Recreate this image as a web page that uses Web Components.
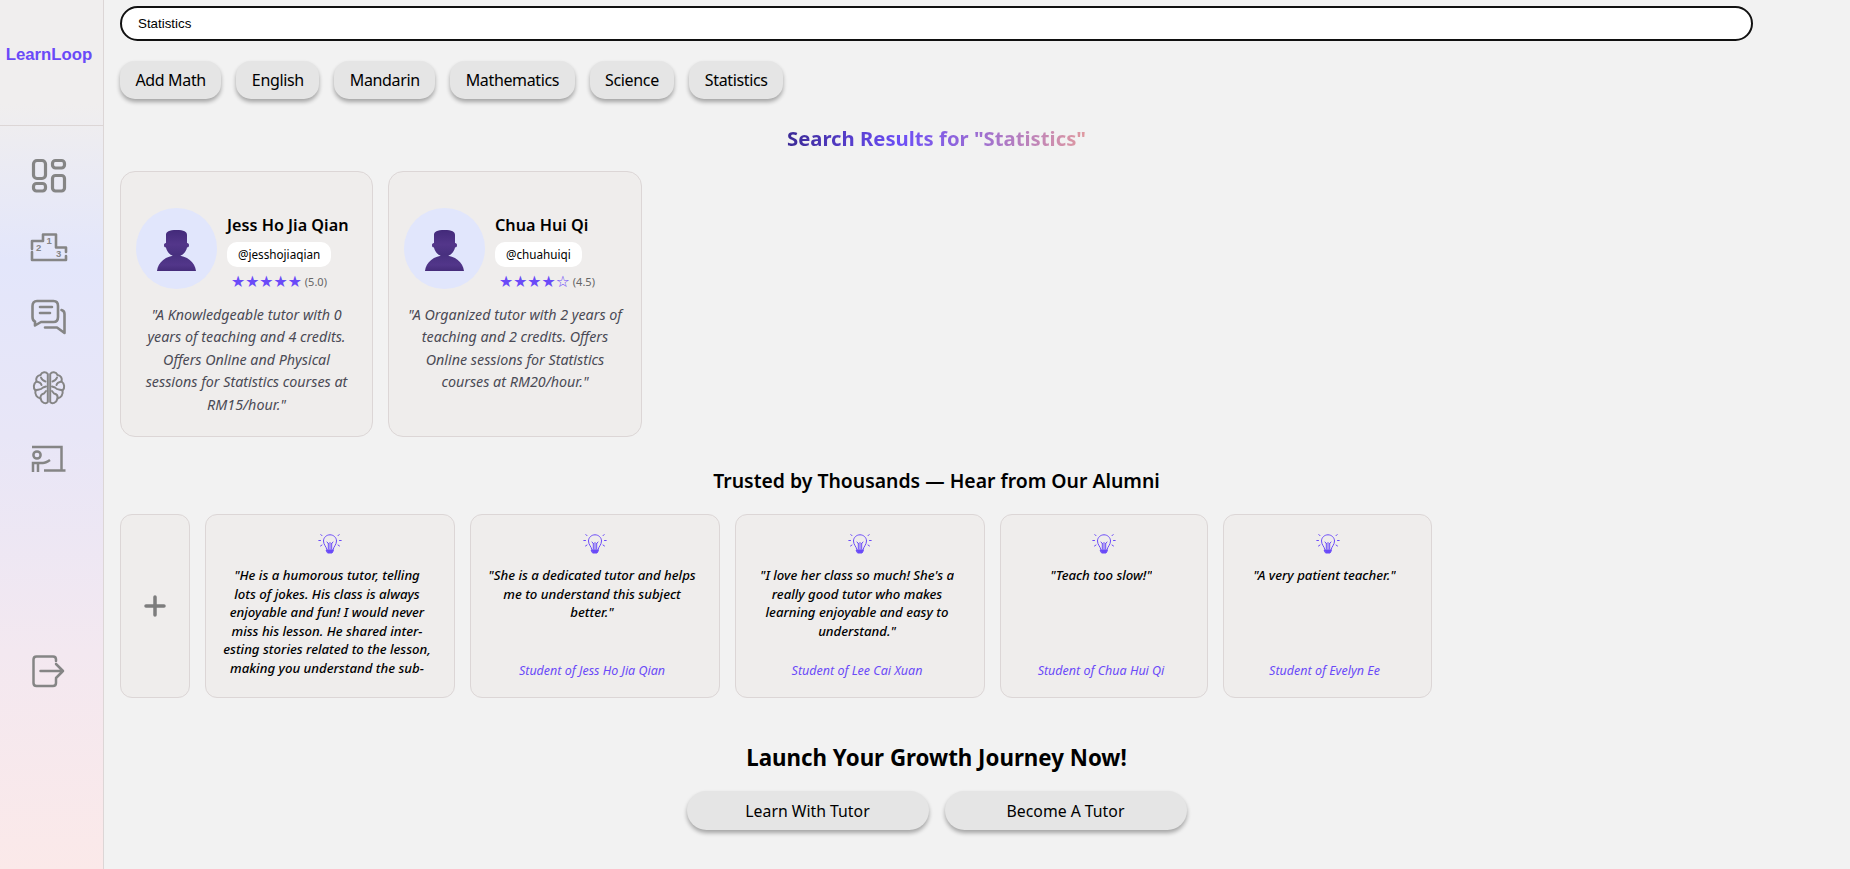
<!DOCTYPE html>
<html lang="en"><head><meta charset="utf-8"><title>LearnLoop</title>
<style>
html,body{margin:0;height:100%;background:#f2f2f2;overflow:hidden}
body{font-family:"Noto Sans","Open Sans",sans-serif;color:#000}
</style></head><body>
<ll-app>
  <ll-sidebar slot="side"></ll-sidebar>
  <ll-search value="Statistics"></ll-search>
  <ll-chips><ll-chip>Add Math</ll-chip><ll-chip>English</ll-chip><ll-chip>Mandarin</ll-chip><ll-chip>Mathematics</ll-chip><ll-chip>Science</ll-chip><ll-chip>Statistics</ll-chip></ll-chips>
  <ll-results>Search Results for "Statistics"</ll-results>
  <ll-row class="tutors">
    <ll-tutor name="Jess Ho Jia Qian" handle="@jesshojiaqian" stars="★★★★★" rating="(5.0)" w="253">"A Knowledgeable tutor with 0<br>years of teaching and 4 credits.<br>Offers Online and Physical<br>sessions for Statistics courses at<br>RM15/hour."</ll-tutor>
    <ll-tutor name="Chua Hui Qi" handle="@chuahuiqi" stars="★★★★☆" rating="(4.5)" w="254">"A Organized tutor with 2 years of<br>teaching and 2 credits. Offers<br>Online sessions for Statistics<br>courses at RM20/hour."</ll-tutor>
  </ll-row>
  <ll-title size="19.4" top="30">Trusted by Thousands — Hear from Our Alumni</ll-title>
  <ll-reviews>
    <ll-add></ll-add>
    <ll-review w="250" author="">"He is a humorous tutor, telling<br>lots of jokes. His class is always<br>enjoyable and fun! I would never<br>miss his lesson. He shared inter-<br>esting stories related to the lesson,<br>making you understand the sub-</ll-review>
    <ll-review w="250" author="Student of Jess Ho Jia Qian">"She is a dedicated tutor and helps<br>me to understand this subject<br>better."</ll-review>
    <ll-review w="250" author="Student of Lee Cai Xuan">"I love her class so much! She's a<br>really good tutor who makes<br>learning enjoyable and easy to<br>understand."</ll-review>
    <ll-review w="208" author="Student of Chua Hui Qi">"Teach too slow!"</ll-review>
    <ll-review w="209" author="Student of Evelyn Ee">"A very patient teacher."</ll-review>
  </ll-reviews>
  <ll-title size="22.3" top="44" bold="1">Launch Your Growth Journey Now!</ll-title>
  <ll-actions><ll-cta>Learn With Tutor</ll-cta><ll-cta>Become A Tutor</ll-cta></ll-actions>
</ll-app>
<script>
function def(name, css, html, init){
  customElements.define(name, class extends HTMLElement{
    constructor(){super();this.attachShadow({mode:'open'});}
    connectedCallback(){
      const a=n=>this.getAttribute(n)||'';
      this.shadowRoot.innerHTML='<style>'+css+'</style>'+(typeof html==='function'?html(a):html);
      if(init)init.call(this,a);
    }
  });
}
const FONT='"Noto Sans","Open Sans",sans-serif';
const PURPLE='#6a4af8';
const IC='fill="none" stroke="#858585" stroke-linecap="round" stroke-linejoin="round"';

def('ll-app',`:host{display:flex;height:869px;width:1850px}
.main{flex:1;min-width:0;padding:6px 97px 0 16px;display:flex;flex-direction:column}`,
`<slot name="side"></slot><div class="main"><slot></slot></div>`);

def('ll-sidebar',`:host{display:flex;flex-direction:column;width:104px;flex:none;box-sizing:border-box;border-right:1px solid #dcd6d6;
  background:linear-gradient(180deg,#f0eeee 0,#f0eeee 12%,#e3e6fb 30%,#e8e6f7 50%,#f3e8f0 75%,#fbe9e9 100%)}
.logo{height:126px;box-sizing:border-box;border-bottom:1px solid #dcd6d6;display:flex;align-items:flex-start;justify-content:center;padding:46px 5px 0 0;
  font:bold 16.800px/18px "Liberation Sans",Arial,sans-serif;color:${PURPLE}}
nav{display:flex;flex-direction:column;align-items:center;flex:1;padding-right:5px}
svg{display:block}
.i1{margin-top:32px}.i2{margin-top:38px}.i3{margin-top:37px}.i4{margin-top:33px}.i5{margin-top:39px}.i6{margin-top:182px}`,
`<div class="logo">LearnLoop</div><nav>
<svg class="i1" width="36" height="36" viewBox="0 0 36 36" ${IC} stroke-width="3.2"><rect x="2.500" y="2.500" width="12" height="18" rx="3.500"/><rect x="21.500" y="2.500" width="12" height="7.500" rx="3"/><rect x="2.500" y="25.500" width="12" height="7.500" rx="3"/><rect x="21.500" y="17.500" width="12" height="15.500" rx="3"/></svg>
<svg class="i2" width="38" height="30" viewBox="0 0 38 30" ${IC} stroke-width="2.600"><path d="M2 17V9H13V2.500H26V15.500H36V20"/><path d="M36 24V28H2V20"/><g fill="#858585" stroke="none" font-family="Liberation Sans,Arial,sans-serif" font-weight="700" font-size="9.500"><text x="16.500" y="12">1</text><text x="6" y="19">2</text><text x="26" y="25">3</text></g></svg>
<svg class="i3" width="36" height="38" viewBox="0 0 36 38" ${IC} stroke-width="2.600"><path d="M6 2H22.500C25.500 2 27 4 27 7V18C27 21 25.500 23 22.500 23H10L4 26.500V22.500C2.500 22 1.500 20.500 1.500 18V7C1.500 4 3 2 6 2Z"/><path d="M9 8H21M9 14H19"/><path d="M30.500 11C32.500 11.500 33.500 13 33.500 15V34L26 28.500H14"/></svg>
<svg class="i4" width="34" height="36" viewBox="0 0 34 36" ${IC} stroke-width="2"><path d="M15.800 4C14 1.500 10 1.500 8.500 5C5 5.500 3.500 8.500 4.500 11.500C1.500 13.500 .8 18 3.500 20.500C2.500 24.500 5 28 8.500 28.500C9.500 33 14 34.500 15.800 32V4Z"/><path d="M18.200 4C20 1.500 24 1.500 25.500 5C29 5.500 30.500 8.500 29.500 11.500C32.500 13.500 33.200 18 30.500 20.500C31.500 24.500 29 28 25.500 28.500C24.500 33 20 34.500 18.200 32V4Z"/><path d="M4.500 11.500C7 12 9 13 9.500 15M9 7.500C10 10 11.500 11 13.500 11.500M3.500 20.500C6 19.500 9 20 11 17.500L14 16.500M8.500 28.500C8 26 9.500 24 12 23.500L14 21M29.500 11.500C27 12 25 13 24.500 15M25 7.500C24 10 22.500 11 20.500 11.500M30.500 20.500C28 19.500 25 20 23 17.500L20 16.500M25.500 28.500C26 26 24.500 24 22 23.500L20 21"/></svg>
<svg class="i5" width="36" height="28" viewBox="0 0 36 28" fill="none" stroke="#858585" stroke-width="2.500"><path d="M1 2H30.500V25M13 25.500H34.500"/><circle cx="6" cy="10" r="3.600"/><path d="M2 27V18H12C14 18 16 17 19 15M7 27V19"/></svg>
<svg class="i6" width="34" height="34" viewBox="0 0 34 34" ${IC} stroke-width="2.500"><path d="M24 6V4.500C24 2.500 23 1.500 21 1.500H4.500C2.500 1.500 1.500 2.500 1.500 4.500V28C1.500 30 2.500 31 4.500 31H21C23 31 24 30 24 28V24"/><path d="M8.500 16H31M24 9L31 16L24 23"/></svg>
</nav>`);

def('ll-search',`:host{display:block;height:35px;box-sizing:border-box;border:2px solid #111;border-radius:18px;background:#fff;
 font:13.330px/31px "Liberation Sans",Arial,sans-serif;color:#000;padding-left:16px}`,`<span></span>`,
 function(a){this.shadowRoot.querySelector('span').textContent=a('value');});

def('ll-chips',`:host{display:flex;gap:15px;margin-top:20px}`,`<slot></slot>`);
def('ll-chip',`:host{display:block;height:38px;padding:0 15.500px;box-sizing:border-box;border-radius:15px;background:#e5e5e5;
 box-shadow:0 3px 4px rgba(0,0,0,.32);font:400 16px/38px ${FONT};letter-spacing:-.36px;color:#000;white-space:nowrap}`,`<slot></slot>`);

def('ll-results',`:host{display:block;text-align:center;margin-top:25px;height:28px}
span{font:700 20.300px/28px ${FONT};background:linear-gradient(90deg,#3b2a96 0%,#6c4ef6 38%,#e09aa0 100%);-webkit-background-clip:text;background-clip:text;color:transparent}`,
`<span><slot></slot></span>`);

def('ll-row',`:host{display:flex;gap:15px;margin-top:19px}`,`<slot></slot>`);
const PERSON=`<svg width="81" height="81" viewBox="0 0 81 81"><defs><linearGradient id="g" x1="0" y1="0" x2="0" y2="1"><stop offset="0" stop-color="#432a7a"/><stop offset=".35" stop-color="#53368a"/><stop offset=".6" stop-color="#48307f"/><stop offset=".85" stop-color="#52368a"/><stop offset="1" stop-color="#452c7a"/></linearGradient></defs><circle cx="40.500" cy="40.500" r="40.500" fill="#e1e6fc"/><path fill="url(#g)" d="M21 63C22 54 30 47.500 40.500 47.500C51 47.500 59 54 60 63ZM30 35V27C30 23.500 33 22 40.500 22C48 22 51 23.500 51 27V35C52.500 35 53 36 53 37.200C53 38.500 52.300 39.500 51 39.500C50 44.500 46 48.500 40.500 48.500C35 48.500 31 44.500 30 39.500C28.700 39.500 28 38.500 28 37.200C28 36 28.500 35 30 35Z"/></svg>`;
def('ll-tutor',`:host{display:block;box-sizing:border-box;height:266px;border:1px solid #dcd6d6;border-radius:15px;background:#efedec;padding:36px 15px 0}
.top{display:flex;gap:10px}
svg{display:block;flex:none}
.info{display:flex;flex-direction:column;align-items:flex-start}
.name{font:600 16.200px/20px ${FONT};margin-top:7px;white-space:nowrap}
.h{margin-top:7px;height:25px;padding:0 11px;background:#fff;border-radius:10px;font:400 11.700px/25px ${FONT};white-space:nowrap}
.r{margin:4px 0 0 4px;display:flex;align-items:center;gap:3px;height:22px}
.s{font:15.800px/22px "DejaVu Sans",sans-serif;color:${PURPLE}}
.v{font:400 11px/22px ${FONT};color:#666}
.q{margin-top:11px;text-align:center;font:italic 400 14.300px/22.400px ${FONT};color:#4a4a55;white-space:nowrap}`,
a=>`<div class="top">${PERSON}<div class="info"><div class="name">${a('name')}</div><div class="h">${a('handle')}</div><div class="r"><span class="s">${a('stars')}</span><span class="v">${a('rating')}</span></div></div></div><div class="q"><slot></slot></div>`,
function(a){this.style.width=a('w')+'px';});

def('ll-title',`:host{display:block;text-align:center;font-weight:600;white-space:nowrap}`,`<slot></slot>`,
function(a){this.style.fontSize=a('size')+'px';this.style.lineHeight=a('bold')?'32px':'27px';this.style.marginTop=a('top')+'px';this.style.fontWeight=a('bold')?700:600;});

def('ll-reviews',`:host{display:flex;gap:15px;margin-top:20px;height:184px}`,`<slot></slot>`);
def('ll-add',`:host{display:flex;align-items:center;justify-content:center;width:70px;box-sizing:border-box;border:1px solid #dcd6d6;border-radius:12px;background:#efedec}
svg{display:block}`,`<svg width="22" height="22" viewBox="0 0 22 22"><path d="M11 2V20M2 11H20" stroke="#7d7d7d" stroke-width="3.500" stroke-linecap="round"/></svg>`);
const BULB=`<svg width="24" height="22" viewBox="0 0 24 22" fill="none" stroke="${PURPLE}" stroke-width="1" stroke-linecap="round"><path d="M8.800 16.500C8.500 13.500 5.500 12 5.500 8C5.500 4.500 8.500 1.800 12 1.800C15.500 1.800 18.500 4.500 18.500 8C18.500 12 15.500 13.500 15.200 16.500Z"/><path d="M10.300 16V10.500M12 16V9.500M13.700 16V10.500M10.300 10.500L9 9M13.700 10.500L15 9"/><path d="M8.500 17.500H15.500L14 20H10Z" fill="${PURPLE}"/><path d="M.8 7.500H2.500M21.500 7.500H23.200M2.800 1.500L4 2.700M21.200 1.500L20 2.700M2.500 13L4 12M21.500 13L20 12"/></svg>`;
def('ll-review',`:host{display:flex;flex-direction:column;align-items:center;box-sizing:border-box;border:1px solid #dcd6d6;border-radius:12px;background:#efedec;padding:18px 4px 0;overflow:hidden}
svg{display:block;flex:none}
.t{margin:11px 6px 0 0;text-align:center;font:italic 500 13.200px/18.500px ${FONT};white-space:nowrap;height:95px;overflow:hidden}
:host([author=""]) .t{height:125px}
.a{margin-right:6px;font:italic 400 12.500px/20px ${FONT};color:${PURPLE};white-space:nowrap}`,
a=>`${BULB}<div class="t"><slot></slot></div>${a('author')?`<div class="a">${a('author')}</div>`:''}`,
function(a){this.style.width=a('w')+'px';});

def('ll-actions',`:host{display:flex;justify-content:center;gap:16px;margin-top:17px}`,`<slot></slot>`);
def('ll-cta',`:host{display:block;width:242px;height:39px;border-radius:20px;background:#e5e5e5;box-shadow:0 3px 4px rgba(0,0,0,.32);text-align:center;font:400 15.800px/40px ${FONT};white-space:nowrap}`,`<slot></slot>`);
</script>
</body></html>
